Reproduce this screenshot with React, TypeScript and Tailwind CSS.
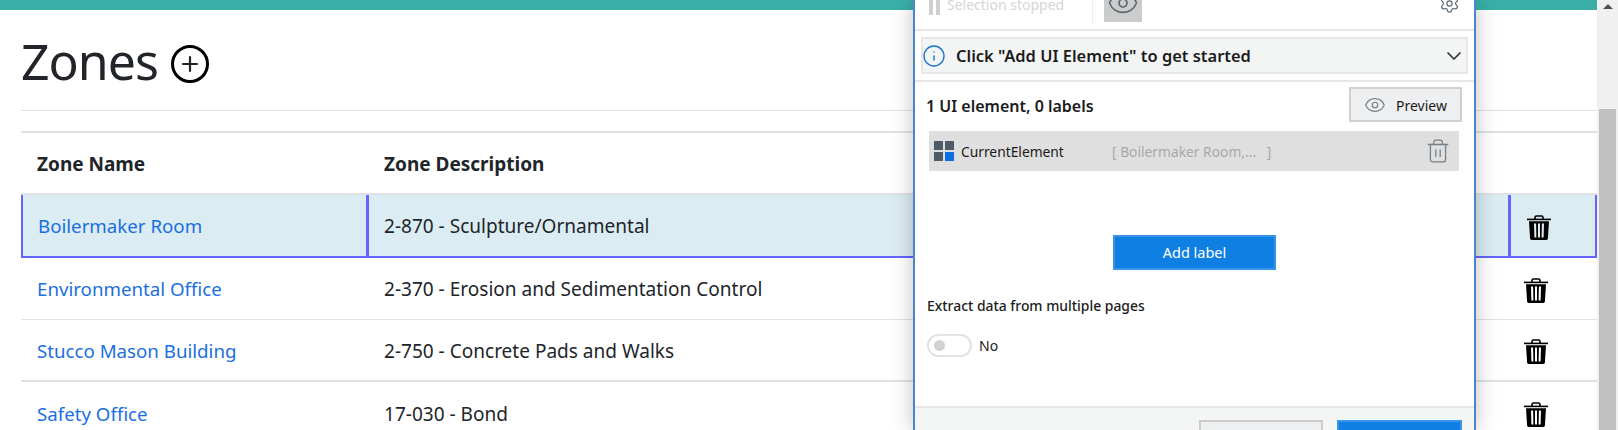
import { Eye, Info, ChevronDown, Settings, Trash2, Plus } from "lucide-react"

const rows = [
  { name: "Boilermaker Room", desc: "2-870 - Sculpture/Ornamental", selected: true, height: "h-[63px]", border: "" },
  { name: "Environmental Office", desc: "2-370 - Erosion and Sedimentation Control", selected: false, height: "h-[62px]", border: "border-b border-[#dee2e6]" },
  { name: "Stucco Mason Building", desc: "2-750 - Concrete Pads and Walks", selected: false, height: "h-[62px]", border: "border-b-2 border-[#dee2e6]" },
  { name: "Safety Office", desc: "17-030 - Bond", selected: false, height: "h-[62px]", border: "" },
]

function TrashCan() {
  return (
    <svg viewBox="0 0 26 26" className="mt-[4px] h-[26px] w-[26px]">
      <path d="M9 4V2.6C9 1.7 9.7 1 10.6 1h4.8c.9 0 1.6.7 1.6 1.6V4" fill="none" stroke="#000" strokeWidth="1.6" />
      <rect x="1" y="3.6" width="24" height="1.6" fill="#000" />
      <path
        fillRule="evenodd"
        fill="#000"
        d="M3 6.2h20l-1.1 17.4c-.1.8-.6 1.4-1.4 1.4H5.5c-.8 0-1.3-.6-1.4-1.4zM8 8.5l.4 14h2l-.3-14zM12 8.5v14h2v-14zM15.9 8.5l-.3 14h2l.4-14z"
      />
    </svg>
  )
}

function ZoneRow({ row }: { row: (typeof rows)[number] }) {
  return (
    <div
      className={`flex items-center ${row.height} ${row.border} ${
        row.selected ? "border-x-2 border-b-2 border-[#6464ff] bg-[#dcecf3]" : ""
      }`}
    >
      <div className={`flex h-full w-[346px] items-center pt-[2px] text-[18.7px] ${row.selected ? "border-r-[3px] border-[#6464ff] pl-[15px]" : "pl-[16px]"}`}>
        <a className="text-[#1a6fe0]">{row.name}</a>
      </div>
      <div className={`flex-1 pt-[2px] text-[19.05px] ${row.selected ? "pl-[15px]" : "pl-[17px]"}`}>{row.desc}</div>
      <div
        className={`flex h-full w-[89px] items-center ${row.selected ? "-mr-[2px] border-l-[3px] border-[#6464ff] pl-[15px]" : "pl-[15px]"}`}
      >
        <TrashCan />
      </div>
    </div>
  )
}

function ZonesPage() {
  return (
    <div className="pl-[21px]">
      <div className="flex h-[101px] items-center gap-[13px] border-b border-[#dee2e6] pt-[2px]">
        <h1 className="text-[50px] leading-none tracking-[-1px] text-[#212529]">Zones</h1>
        <span className="mt-[6px] flex h-[38px] w-[38px] items-center justify-center rounded-full border-[3px] border-black">
          <Plus className="h-[24px] w-[24px]" strokeWidth={2.2} />
        </span>
      </div>
      <div className="mt-[20px] border-t-2 border-[#dee2e6]">
        <div className="flex h-[62px] items-center border-b-2 border-[#dee2e6] pt-[2px] text-[19px] font-bold text-[#212529]">
          <div className="w-[346px] pl-[16px]">Zone Name</div>
          <div className="pl-[17px]">Zone Description</div>
        </div>
        {rows.map((row) => (
          <ZoneRow key={row.name} row={row} />
        ))}
      </div>
    </div>
  )
}

function Panel() {
  return (
    <div className="absolute bottom-0 left-[913px] top-0 flex w-[563px] flex-col border-x-2 border-[#4a86c8] bg-white font-['Noto_Sans',sans-serif] text-[#1b1b1b] shadow-[0_0_20px_rgba(0,0,0,0.25)]">
      {/* toolbar, scrolled partly out of the window */}
      <div className="flex h-[31px] shrink-0 items-start border-b-2 border-[#e6e6e6] pl-[14px]">
        <div className="flex h-[24px] items-start gap-[3px] pt-0">
          <span className="h-[15px] w-[4px] bg-[#d0d0d0]" />
          <span className="h-[15px] w-[4px] bg-[#d0d0d0]" />
        </div>
        <span className="ml-[7px] text-[14px] leading-[10px] text-[#d5d5d5]">Selection stopped</span>
        <span className="ml-[28px] h-[24px] w-px bg-[#eeeeee]" />
        <span className="ml-[11px] flex h-[22px] w-[38px] items-end justify-center overflow-hidden bg-[#cccccc]">
          <Eye className="mb-[3px] h-[32px] w-[32px] shrink-0 text-[#5c6b75]" strokeWidth={1.3} />
        </span>
        <Settings className="-mt-[7px] ml-auto mr-[14px] h-[21px] w-[21px] text-[#5c6b75]" strokeWidth={1.4} />
      </div>

      <div className="mx-[6px] mt-[6px] flex h-[37px] shrink-0 items-center border-2 border-[#e6e8e8] bg-[#f3f5f5]">
        <Info className="-ml-[1px] h-[24px] w-[24px] text-[#1a73d9]" strokeWidth={1.4} />
        <span className="ml-[10px] flex-1 pt-[2px] text-[16.45px] font-semibold">Click "Add UI Element" to get started</span>
        <ChevronDown className="h-[24px] w-[24px] text-[#333333]" strokeWidth={1.7} />
      </div>

      <div className="mt-[6px] flex shrink-0 items-center justify-between border-t-2 border-[#e6e6e6] pl-[11px] pr-[12px] pt-[5px]">
        <span className="pt-[2px] text-[16px] font-semibold">1 UI element, 0 labels</span>
        <button className="flex h-[35px] w-[113px] items-center justify-center gap-[10px] border-2 border-[#d0d0d0] bg-[#eeeff1] pt-[1px] text-[14px]">
          <Eye className="h-[22px] w-[22px] text-[#73808a]" strokeWidth={1.3} />
          Preview
        </button>
      </div>

      <div className="ml-[14px] mr-[15px] mt-[9px] flex h-[40px] shrink-0 items-center bg-[#dfdfdf] pl-[5px] pr-[8px]">
        <span className="grid h-[20px] w-[20px] grid-cols-2 gap-[2px]">
          <i className="bg-[#4f5b66]" />
          <i className="bg-[#4f5b66]" />
          <i className="bg-[#4f5b66]" />
          <i className="bg-[#0b6fe0]" />
        </span>
        <span className="ml-[7px] w-[151px] pt-[2px] text-[13.8px]">CurrentElement</span>
        <span className="pt-[2px] text-[13.8px] text-[#a8a8a8]">[ Boilermaker Room,...&nbsp;&nbsp;&nbsp;]</span>
        <Trash2 className="ml-auto h-[26px] w-[26px] text-[#73808a]" strokeWidth={1.2} />
      </div>

      <div className="mt-[64px] flex shrink-0 justify-center">
        <button className="h-[35px] w-[163px] border-2 border-[#3a94e8] bg-[#0f7fe4] text-[14.5px] text-white">Add label</button>
      </div>

      <div className="ml-[12px] mt-[26px] shrink-0 text-[13.9px] font-medium">Extract data from multiple pages</div>
      <div className="ml-[12px] mt-[17px] flex shrink-0 items-center gap-[7px]">
        <span className="flex h-[23px] w-[45px] items-center rounded-full border-2 border-[#e2e2e2] pl-[5px]">
          <span className="h-[11px] w-[11px] rounded-full bg-[#d2d2d2]" />
        </span>
        <span className="text-[14px]">No</span>
      </div>

      <div className="mt-auto flex h-[24px] shrink-0 items-start justify-end gap-[14px] border-t-2 border-[#e6e6e6] bg-[#f4f5f5] pr-[12px] pt-[12px]">
        <span className="h-[20px] w-[124px] border-2 border-[#cccccc] bg-[#eeeff1]" />
        <span className="h-[20px] w-[125px] border-2 border-[#3a94e8] bg-[#0f7fe4]" />
      </div>
    </div>
  )
}

export default function App() {
  return (
    <div className="relative flex h-[430px] overflow-hidden bg-white font-['Noto_Sans',sans-serif] text-[#212529]">
      <div className="w-[1597px] shrink-0">
        <div className="h-[10px] bg-[#3aafa9]" />
        <ZonesPage />
      </div>
      <Panel />
      {/* browser scrollbar */}
      <div className="flex flex-1 flex-col items-center bg-[#f0f0f0]">
        <span className="mt-[4px] h-0 w-0 border-x-[5px] border-b-[5px] border-x-transparent border-b-[#505050]" />
        <span className="mt-[100px] w-[17px] flex-1 bg-[#c0c0c0]" />
      </div>
    </div>
  )
}
